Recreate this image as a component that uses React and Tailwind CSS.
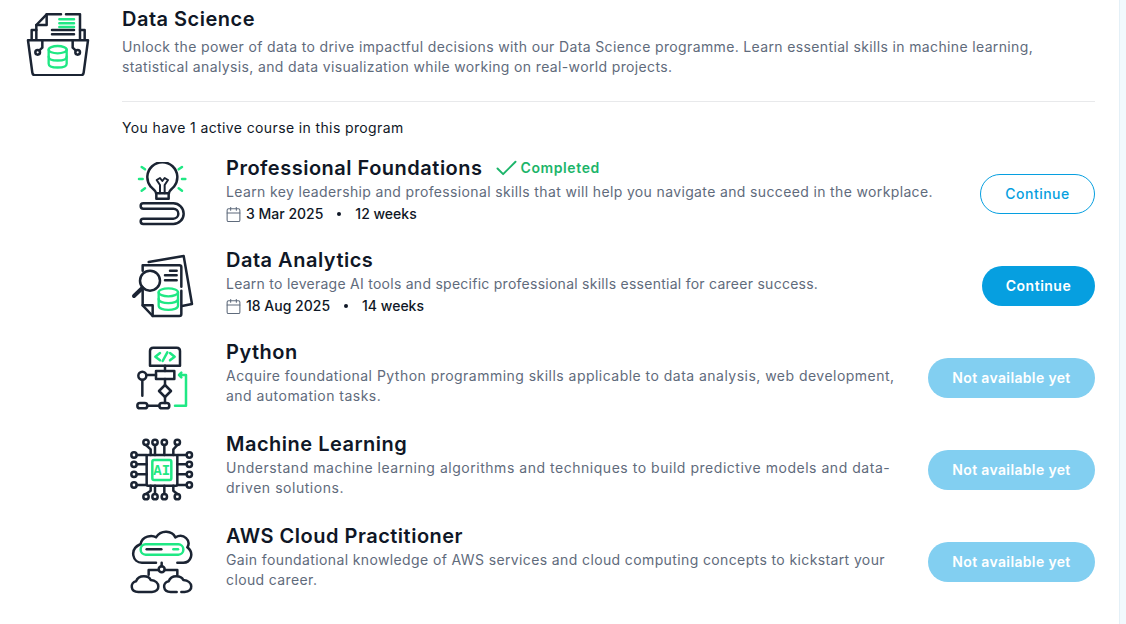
import React from 'react';
import { Check, Calendar } from 'lucide-react';

const navy = '#1b2433';
const green = '#1fe884';

function Db({ cx, top, rx = 29, ry = 11, step = 19 }) {
  const bottom = top + step * 2;
  return (
    <g fill="none" stroke={green} strokeWidth="7">
      <ellipse cx={cx} cy={top} rx={rx} ry={ry} />
      <path d={`M${cx - rx} ${top} V${bottom} C${cx - rx} ${bottom + ry * 1.4} ${cx + rx} ${bottom + ry * 1.4} ${cx + rx} ${bottom} V${top}`} />
      <path d={`M${cx - rx} ${top + step} C${cx - rx} ${top + step + ry * 1.4} ${cx + rx} ${top + step + ry * 1.4} ${cx + rx} ${top + step}`} />
    </g>
  );
}

function BasketIcon() {
  return (
    <svg viewBox="78 36 192 192" className="w-16 h-16 shrink-0" fill="none" stroke={navy} strokeWidth="7.5" strokeLinecap="round" strokeLinejoin="round">
      <path d="M109 116 V75 L140 43 H183 M198 43 H240 V116" />
      <path d="M109 75 H140 V43" />
      <path d="M109 90 H95 V118 M240 90 H254 V118" />
      <path d="M84 121 H264 L251 218 Q250 226 242 226 H106 Q98 226 97 218 Z" />
      <path d="M127 122 V143 L118 151 M218 122 V143 L227 151" />
      <circle cx="113" cy="157" r="7" />
      <circle cx="233" cy="157" r="7" />
      <path d="M156 90 H222 M156 103 H222" />
      <path d="M178 58 H222 M178 70 H222 M178 81 H222" stroke={green} />
      <Db cx={173} top={149} rx={27} ry={11} step={21} />
    </svg>
  );
}

function BulbIcon() {
  return (
    <svg viewBox="30 36 192 192" className="w-16 h-16 shrink-0" fill="none" stroke={navy} strokeWidth="7.5" strokeLinecap="round" strokeLinejoin="round">
      <path d="M108 130 C108 122 100 118 92 110 A45 45 0 1 1 162 110 C154 118 147 122 147 130 Z" />
      <path d="M109 132 V146 H146 V132" />
      <path d="M120 130 V105 L110 90 L120 84 L127 93 L134 84 L144 90 L134 105 V130" strokeWidth="6" />
      <path d="M70 160 H160 A31 31 0 0 1 160 222 H70 A8 8 0 0 1 70 206 H160 A15 15 0 0 0 160 176 H70 A8 8 0 0 1 70 160 Z" />
      <path d="M57 87 H68 M65 51 L75 58 M65 122 L75 115 M186 87 H196 M186 51 L176 58 M186 122 L176 115" stroke={green} />
    </svg>
  );
}

function ReportIcon() {
  return (
    <svg viewBox="30 312 192 192" className="w-16 h-16 shrink-0" fill="none" stroke={navy} strokeWidth="7.5" strokeLinecap="round" strokeLinejoin="round">
      <path d="M86 336 L191 318 L216 462 L186 468" />
      <path d="M68 362 V346 H178 Q184 346 184 352 V410 M184 422 V492 Q184 498 178 498 H98 L68 466 V420" />
      <path d="M68 466 H98 V498" />
      <path d="M150 362 H170 M135 376 H170 M135 391 H170" />
      <circle cx="90" cy="392" r="30" fill="#fff" />
      <path d="M67 414 L42 438" strokeWidth="12" />
      <Db cx={145} top={427} rx={29} ry={12} step={20} />
    </svg>
  );
}

function FlowIcon() {
  return (
    <svg viewBox="30 33 192 192" className="w-16 h-16 shrink-0" fill="none" stroke={navy} strokeWidth="7.5" strokeLinecap="round" strokeLinejoin="round">
      <path d="M90 92 V48 Q90 38 100 38 H170 Q180 38 180 48 V92 Z" />
      <path d="M120 54 L106 65 L120 76 M150 54 L164 65 L150 76 M142 52 L128 78" stroke={green} />
      <path d="M135 92 V108 M80 120 H108 M135 132 V150 M135 186 V204 M67 135 V182 M82 212 H118" />
      <rect x="108" y="108" width="55" height="24" />
      <circle cx="67" cy="122" r="12" />
      <path d="M135 150 L153 168 L135 186 L117 168 Z" />
      <rect x="52" y="204" width="30" height="16" rx="8" />
      <rect x="118" y="204" width="30" height="16" rx="8" />
      <path d="M165 212 H198 V120 H177 M184 113 L177 120 L184 127" stroke={green} />
    </svg>
  );
}

function ChipIcon() {
  const ys = [75, 103, 133, 165];
  const xs = [78, 105, 133, 172];
  return (
    <svg viewBox="30 24 192 192" className="w-16 h-16 shrink-0" fill="none" stroke={navy} strokeWidth="7.5" strokeLinecap="round" strokeLinejoin="round">
      <rect x="80" y="75" width="92" height="92" rx="4" />
      <rect x="97" y="90" width="57" height="60" rx="5" stroke={green} />
      <text x="125" y="134" textAnchor="middle" fill={green} stroke="none" fontFamily="'Liberation Mono', monospace" fontWeight="700" fontSize="42">AI</text>
      {ys.map((y) => (
        <g key={y}>
          <circle cx="42" cy={y} r="8" />
          <circle cx="208" cy={y} r="8" />
          <path d={`M50 ${y} H80 M200 ${y} H172`} />
        </g>
      ))}
      {xs.map((x) => (
        <g key={x}>
          <circle cx={x} cy="37" r="8" />
          <circle cx={x} cy="200" r="8" />
          <path d={`M${x} 45 L${Math.min(Math.max(x, 92), 160)} 58 V75 M${x} 192 L${Math.min(Math.max(x, 92), 160)} 182 V167`} />
        </g>
      ))}
    </svg>
  );
}

function CloudIcon() {
  return (
    <svg viewBox="30 300 192 192" className="w-16 h-16 shrink-0" fill="none" stroke={navy} strokeWidth="7.5" strokeLinecap="round" strokeLinejoin="round">
      <path d="M108 398 H66 C38 398 26 358 62 342 C66 318 96 314 108 322 C124 298 156 302 166 322 C192 308 214 332 202 352 C224 370 212 398 190 398 H172" />
      <rect x="62" y="343" width="128" height="31" rx="15" stroke={green} />
      <path d="M80 358 H124" />
      <path d="M160 358 H174" stroke={green} />
      <path d="M125 398 V409 M116 420 H86 V434 M134 420 H172 V434" />
      <circle cx="125" cy="418" r="9" />
      <path d="M96 486 H55 C30 486 30 458 48 454 C56 432 88 436 92 450 C122 452 122 486 96 486 Z" />
      <path d="M170 486 H152 C128 486 126 458 146 454 C154 432 184 436 190 450 C220 452 222 486 194 486 H184" />
    </svg>
  );
}

const courses = [
  { title: 'Professional Foundations', Icon: BulbIcon, completed: true, track: 'tracking-[0.36px]', desc: ['Learn key leadership and professional skills that will help you navigate and succeed in the workplace.'], date: '3 Mar 2025', weeks: '12 weeks', action: 'outline' },
  { title: 'Data Analytics', Icon: ReportIcon, track: 'tracking-[0.26px]', desc: ['Learn to leverage AI tools and specific professional skills essential for career success.'], date: '18 Aug 2025', weeks: '14 weeks', action: 'solid' },
  { title: 'Python', Icon: FlowIcon, track: 'tracking-[0.47px]', desc: ['Acquire foundational Python programming skills applicable to data analysis, web development,', 'and automation tasks.'] },
  { title: 'Machine Learning', Icon: ChipIcon, track: 'tracking-[0.53px]', desc: ['Understand machine learning algorithms and techniques to build predictive models and data-', 'driven solutions.'] },
  { title: 'AWS Cloud Practitioner', Icon: CloudIcon, track: 'tracking-[0.38px]', desc: ['Gain foundational knowledge of AWS services and cloud computing concepts to kickstart your', 'cloud career.'] },
];

function CourseButton({ action }) {
  if (action === 'outline') {
    return <button className="w-[115px] h-10 rounded-full border border-[#069fe0] text-[#069fe0] text-sm font-medium tracking-[0.5px] bg-white">Continue</button>;
  }
  if (action === 'solid') {
    return <button className="w-[113px] h-10 rounded-full bg-[#069fe0] text-white text-sm font-semibold tracking-[0.5px]">Continue</button>;
  }
  return <button className="w-[167px] h-10 rounded-full bg-[#82cff1] text-white text-sm font-semibold tracking-[0.35px]">Not available yet</button>;
}

export default function App() {
  return (
    <div className="h-[624px] overflow-hidden flex bg-white text-[#0f1726] font-['Inter',sans-serif]">
      <main className="w-[1119px] pl-[26px] pr-6 pt-[5px]">
        <div className="flex gap-8">
          <div className="pt-[7px]"><BasketIcon /></div>
          <div className="flex-1">
            <h1 className="text-xl leading-7 font-semibold tracking-[0.5px]">Data Science</h1>
            <p className="mt-1 text-sm leading-5 text-[#5f6b7c] tracking-[0.36px]">
              Unlock the power of data to drive impactful decisions with our Data Science programme. Learn essential skills in machine learning,<br />
              statistical analysis, and data visualization while working on real-world projects.
            </p>
            <div className="mt-6 border-t border-[#e8e9eb]" />
            <p className="mt-4 text-sm leading-5 tracking-[0.38px]">You have 1 active course in this program</p>
          </div>
        </div>
        <div className="mt-[18px] pl-[104px] flex flex-col gap-4">
          {courses.map(({ title, Icon, completed, track, desc, date, weeks, action }) => (
            <div key={title} className="h-[76px] flex items-center justify-between gap-4">
              <div className="flex items-center gap-8">
                <Icon />
                <div className="h-[76px]">
                  <div className="flex items-center gap-[10px] h-6">
                    <h2 className="text-xl leading-6 font-semibold tracking-[0.5px]">{title}</h2>
                    {completed && (
                      <span className="flex items-center gap-px text-sm font-semibold tracking-[0.6px] text-[#1cb56a]">
                        <Check className="w-[27px] h-[27px]" strokeWidth={1.7} />
                        Completed
                      </span>
                    )}
                  </div>
                  <p className={`mt-0.5 text-sm leading-5 text-[#5f6b7c] ${track}`}>
                    {desc.map((line) => <span key={line} className="block">{line}</span>)}
                  </p>
                  {date && (
                    <div className="mt-0.5 flex items-center text-sm leading-5 font-medium">
                      <Calendar className="w-[17px] h-[17px] -ml-px text-[#5f6b7c] mr-[4px]" strokeWidth={1.5} />
                      <span>{date}</span>
                      <span className="w-1 h-1 rounded-full bg-[#0f1726] mx-[14px]" />
                      <span>{weeks}</span>
                    </div>
                  )}
                </div>
              </div>
              <CourseButton action={action} />
            </div>
          ))}
        </div>
      </main>
      <aside className="flex-1 bg-[#f2f9fd] border-l border-[#e4f0f7]" />
    </div>
  );
}
